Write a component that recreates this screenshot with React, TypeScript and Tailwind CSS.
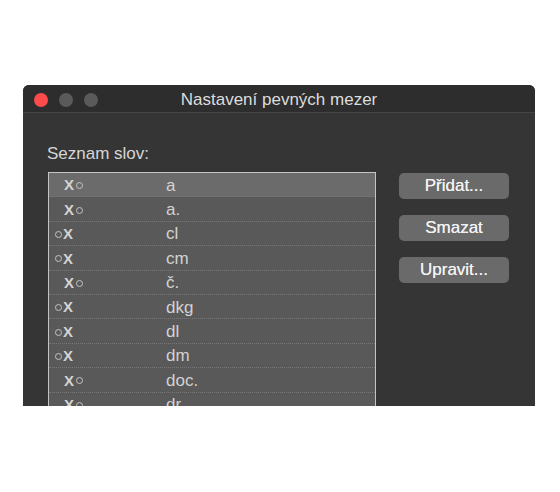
import React from "react";

type Row = { word: string; before: boolean };

// before = mezera před slovem (o x), jinak za slovem (x o)
const ROWS: Row[] = [
  { word: "a", before: false },
  { word: "a.", before: false },
  { word: "cl", before: true },
  { word: "cm", before: true },
  { word: "č.", before: false },
  { word: "dkg", before: true },
  { word: "dl", before: true },
  { word: "dm", before: true },
  { word: "doc.", before: false },
  { word: "dr.", before: false },
  { word: "dt", before: true },
];

const Dot = () => (
  <span className="inline-block h-[7px] w-[7px] rounded-full border border-[#c4c4c4]" />
);

const Mark = ({ before }: { before: boolean }) =>
  before ? (
    <div className="flex items-center gap-[1px] pl-[6px]">
      <Dot />
      <span className="text-[15px] font-bold text-[#d4d4d4]">X</span>
    </div>
  ) : (
    <div className="flex items-center gap-[2px] pl-[15px]">
      <span className="text-[15px] font-bold text-[#d4d4d4]">X</span>
      <Dot />
    </div>
  );

const Button = ({ label }: { label: string }) => (
  <button className="h-[26px] w-[110px] rounded-[5px] bg-[#6a6a6a] text-[17px] leading-[26px] text-[#f2f2f2] [text-shadow:0_0_0.4px_#f2f2f2]">
    {label}
  </button>
);

export default function App() {
  return (
    <div
      className="h-[492px] w-[560px] bg-white pl-[23px] pt-[85px]"
      style={{ fontFamily: '"Liberation Sans", Arial, sans-serif' }}
    >
      <div className="flex h-[321px] w-[512px] flex-col overflow-hidden rounded-t-[6px] bg-[#353535]">
        <div className="relative flex h-[28px] shrink-0 items-center border-b border-[#454545] bg-[#2d2d2d] pl-[11px] pt-[2px]">
          <div className="flex gap-[11px]">
            <span className="h-[14px] w-[14px] rounded-full bg-[#fc4b4b]" />
            <span className="h-[14px] w-[14px] rounded-full bg-[#5a5a5a]" />
            <span className="h-[14px] w-[14px] rounded-full bg-[#5a5a5a]" />
          </div>
          <div className="absolute inset-x-0 top-[5px] text-center text-[17px] leading-[20px] text-[#dcdcdc]">
            Nastavení pevných mezer
          </div>
        </div>

        <div className="flex flex-1 gap-[23px] pl-[24px] pt-[31px]">
          <div className="flex flex-col">
            <div className="h-[19px] text-[17px] leading-[19px] text-[#d6d6d6]">Seznam slov:</div>
            <div className="ml-[1px] mt-[9px] w-[328px] border border-b-0 border-[#c4c4c4] bg-[#595959]">
              {ROWS.map((row, i) => (
                <div
                  key={row.word}
                  className={`flex h-[24.4px] items-center border-b border-dotted border-[#777777] pt-[2px] ${
                    i === 0 ? "bg-[#6b6b6b]" : ""
                  }`}
                >
                  <div className="w-[117px]">
                    <Mark before={row.before} />
                  </div>
                  <span className="text-[17px] leading-[20px] text-[#d2d2d2]">{row.word}</span>
                </div>
              ))}
            </div>
          </div>

          <div className="flex flex-col gap-[16px] pt-[29px]">
            <Button label="Přidat..." />
            <Button label="Smazat" />
            <Button label="Upravit..." />
          </div>
        </div>
      </div>
    </div>
  );
}
